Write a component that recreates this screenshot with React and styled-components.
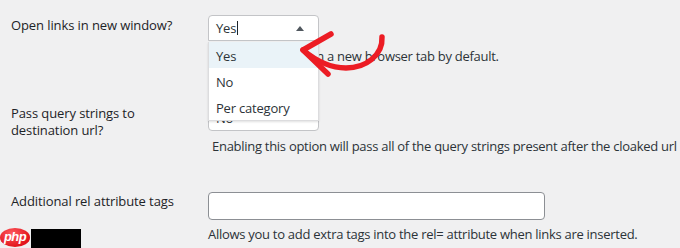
import React from 'react';
import styled, { createGlobalStyle } from 'styled-components';

const GlobalStyle = createGlobalStyle`
  html, body {
    margin: 0;
    padding: 0;
    background: #f0f0f1;
  }
  body {
    font-family: "Open Sans", "Noto Sans", sans-serif;
    color: #1d2327;
    width: 680px;
    height: 248px;
    overflow: hidden;
  }
`;

const Page = styled.div`
  position: relative;
  width: 680px;
  height: 248px;
  padding: 15px 0 0 11px;
  box-sizing: border-box;
`;

const Row = styled.div`
  display: grid;
  grid-template-columns: 197px 1fr;
  height: ${p => p.$h}px;
`;

const Label = styled.div`
  font-size: 13px;
  line-height: 17px;
  letter-spacing: -0.1px;
  color: #1d2327;
  padding-top: ${p => p.$top || 0}px;
`;

const Field = styled.div`
  display: flex;
  flex-direction: column;
  align-items: flex-start;
  position: relative;
`;

const SelectBox = styled.div`
  position: relative;
  width: 111px;
  height: 26px;
  box-sizing: border-box;
  border: 1px solid #c3c4c7;
  border-radius: ${p => (p.$open ? '4px 4px 0 0' : '4px')};
  background: #fff;
  display: flex;
  align-items: center;
  padding: 0 7px;
  font-size: 13px;
  letter-spacing: -0.2px;
  color: #2c3338;
`;

const Caret = styled.span`
  display: inline-block;
  width: 1px;
  height: 14px;
  background: #1d2327;
  margin-left: 1px;
`;

const UpArrow = styled.span`
  position: absolute;
  right: 14px;
  top: 10px;
  width: 0;
  height: 0;
  border-left: 4px solid transparent;
  border-right: 4px solid transparent;
  border-bottom: 5px solid #50575e;
`;

const Menu = styled.ul`
  position: absolute;
  top: 26px;
  left: -1px;
  width: 111px;
  box-sizing: border-box;
  margin: 0;
  padding: 0;
  list-style: none;
  background: #fff;
  border: 1px solid #dcdcde;
  border-top: none;
  box-shadow: 0 1px 2px rgba(0, 0, 0, 0.12);
  z-index: 5;
`;

const MenuItem = styled.li`
  height: 26px;
  display: flex;
  align-items: center;
  padding: 1px 7px 0;
  box-sizing: border-box;
  font-size: 13px;
  letter-spacing: -0.2px;
  color: #2c3338;
  background: ${p => (p.$active ? '#eaf3f8' : '#fff')};
`;

const Desc = styled.div`
  font-size: 13px;
  line-height: 17px;
  letter-spacing: -0.28px;
  color: #2c3338;
  white-space: nowrap;
  margin-top: ${p => p.$mt || 0}px;
  padding-left: ${p => p.$pl || 0}px;
`;

const TextInput = styled.div`
  width: 337px;
  height: 28px;
  box-sizing: border-box;
  border: 1px solid #8c8f94;
  border-radius: 4px;
  background: #fff;
`;

const Arrow = styled.svg`
  position: absolute;
  left: 0;
  top: 0;
  z-index: 6;
  pointer-events: none;
`;

const Badge = styled.div`
  position: absolute;
  left: 0;
  bottom: 0;
  display: flex;
  align-items: flex-end;
`;

const PhpLogo = styled.div`
  width: 30px;
  height: 19px;
  margin-bottom: 1px;
  border-radius: 50%;
  background: radial-gradient(ellipse at 40% 30%, #ff5a5f, #e2141c 70%);
  color: #fff;
  font-family: "Liberation Sans", Arial, sans-serif;
  font-style: italic;
  font-weight: bold;
  font-size: 13px;
  line-height: 18px;
  text-align: center;
  letter-spacing: -0.6px;
`;

const BlackBox = styled.div`
  width: 50px;
  height: 19px;
  background: #000;
  margin-left: 1px;
`;

export default function App() {
  return (
    <>
      <GlobalStyle />
      <Page>
        <Row $h={90}>
          <Label $top={2}>Open links in new window?</Label>
          <Field>
            <SelectBox $open>
              Yes<Caret />
              <UpArrow />
              <Menu>
                <MenuItem $active>Yes</MenuItem>
                <MenuItem>No</MenuItem>
                <MenuItem>Per category</MenuItem>
              </Menu>
            </SelectBox>
            <Desc $mt={7}>Opens up the link in a new browser tab by default.</Desc>
          </Field>
        </Row>
        <Row $h={87}>
          <Label $top={0}>
            Pass query strings to
            <br />
            destination url?
          </Label>
          <Field>
            <SelectBox>No</SelectBox>
            <Desc $mt={7} $pl={4}>
              Enabling this option will pass all of the query strings present after the cloaked url
            </Desc>
          </Field>
        </Row>
        <Row $h={60}>
          <Label $top={1}>Additional rel attribute tags</Label>
          <Field>
            <TextInput />
            <Desc $mt={6}>
              Allows you to add extra tags into the rel= attribute when links are inserted.
            </Desc>
          </Field>
        </Row>
        <Arrow width="680" height="248" viewBox="0 0 680 248">
          <path
            d="M382 37 C 383 55, 366 68, 346 68 C 330 68, 315 60, 303 50"
            fill="none"
            stroke="#ec1c24"
            strokeWidth="5.5"
            strokeLinecap="round"
          />
          <path
            d="M331 34 L 303 50 L 328 74"
            fill="none"
            stroke="#ec1c24"
            strokeWidth="5.5"
            strokeLinecap="round"
            strokeLinejoin="round"
          />
        </Arrow>
        <Badge>
          <PhpLogo>php</PhpLogo>
          <BlackBox />
        </Badge>
      </Page>
    </>
  );
}
